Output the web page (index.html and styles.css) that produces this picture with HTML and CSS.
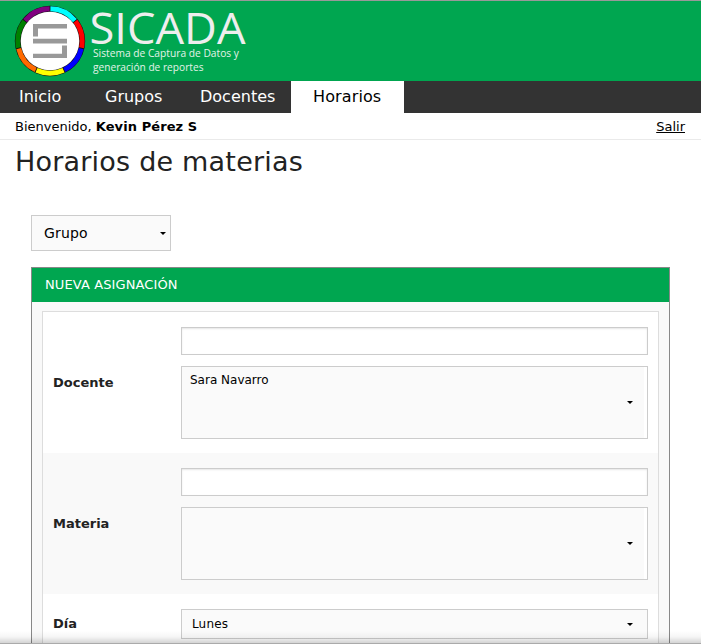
FILE: index.html
```html
<!DOCTYPE html>
<html lang="es">
<head>
<meta charset="utf-8">
<title>SICADA - Horarios</title>
<link rel="stylesheet" href="styles.css">
</head>
<body>
<header class="banner">
  <svg class="logo" width="260" height="80" viewBox="0 1 260 80" role="img" aria-label="SICADA">
    <circle cx="50" cy="41" r="35.2" fill="#111"/>
    <g fill="none" stroke-width="4.9" transform="rotate(-90 50 41)">
      <circle class="seg cyan" cx="50" cy="41" r="32.2" pathLength="70"/>
      <circle class="seg red" cx="50" cy="41" r="32.2" pathLength="70"/>
      <circle class="seg blue" cx="50" cy="41" r="32.2" pathLength="70"/>
      <circle class="seg yellow" cx="50" cy="41" r="32.2" pathLength="70"/>
      <circle class="seg orange" cx="50" cy="41" r="32.2" pathLength="70"/>
      <circle class="seg green" cx="50" cy="41" r="32.2" pathLength="70"/>
      <circle class="seg purple" cx="50" cy="41" r="32.2" pathLength="70"/>
    </g>
    <circle cx="50" cy="41" r="29.3" fill="#fff"/>
    <path fill="#999" d="M33 24h34v4.500H38v8h-5zM33 38.800h34v4.700H33zM62 45.500h5V58H33v-4.300h29z"/>
    <text class="brand" x="89.500" y="44.300" textLength="156" lengthAdjust="spacingAndGlyphs">SICADA</text>
    <text class="tagline" x="93" y="57.300" textLength="146" lengthAdjust="spacingAndGlyphs">Sistema de Captura de Datos y</text>
    <text class="tagline" x="93" y="70.500" textLength="110.500" lengthAdjust="spacingAndGlyphs">generación de reportes</text>
  </svg>
</header>
<nav class="nav">
  <a class="tab inicio">Inicio</a>
  <a class="tab grupos">Grupos</a>
  <a class="tab docentes">Docentes</a>
  <a class="tab active">Horarios</a>
</nav>
<div class="session">
  <span>Bienvenido, <b>Kevin Pérez S</b></span>
  <a class="logout">Salir</a>
</div>
<h1>Horarios de materias</h1>
<main>
  <div class="select group"><span>Grupo</span><i class="arrow"></i></div>
  <section class="panel">
    <h2>NUEVA ASIGNACIÓN</h2>
    <div class="form">
      <div class="row">
        <label>Docente</label>
        <div class="controls">
          <input type="text" class="filter">
          <div class="list"><span>Sara Navarro</span><i class="arrow"></i></div>
        </div>
      </div>
      <div class="row alt">
        <label>Materia</label>
        <div class="controls">
          <input type="text" class="filter">
          <div class="list"><span></span><i class="arrow"></i></div>
        </div>
      </div>
      <div class="row last">
        <label>Día</label>
        <div class="controls">
          <div class="select day"><span>Lunes</span><i class="arrow"></i></div>
        </div>
      </div>
    </div>
  </section>
</main>
<div class="edge"></div>
</body>
</html>
```

FILE: styles.css
```css
* { box-sizing: border-box; }
body {
  margin: 0;
  background: #fff;
  color: #000;
  font: 13px/16px "DejaVu Sans", sans-serif;
}
.banner {
  height: 81px;
  border-top: 1px solid #999;
  background: #00a650;
}
.logo { display: block; }
.seg { stroke-dasharray: 9.700 60.300; }
.cyan { stroke: #0ff; stroke-dashoffset: -0.150; }
.red { stroke: #f00; stroke-dashoffset: -10.150; }
.blue { stroke: #00f; stroke-dashoffset: -20.150; }
.yellow { stroke: #ff0; stroke-dashoffset: -30.150; }
.orange { stroke: #ff6a00; stroke-dashoffset: -40.150; }
.green { stroke: #008000; stroke-dashoffset: -50.150; }
.purple { stroke: #800080; stroke-dashoffset: -60.150; }
.brand { font: 400 44px "Open Sans", sans-serif; fill: #eee; }
.tagline { font: 400 10px "Open Sans", sans-serif; fill: #e4f3e9; }
.nav {
  display: flex;
  height: 32px;
  background: #333;
  color: #fff;
  font-size: 16px;
  line-height: 31px;
}
.tab { padding-left: 19px; }
.inicio { width: 86px; }
.grupos { width: 95px; }
.docentes { width: 110px; }
.active {
  width: 113px;
  padding-left: 22px;
  background: #fff;
  color: #000;
  letter-spacing: .12px;
}
.session {
  display: flex;
  justify-content: space-between;
  height: 27px;
  padding: 6px 16px 0 15px;
  border-bottom: 1px solid #eaeaea;
}
.session b { letter-spacing: .08px; }
.logout { text-decoration: underline; }
h1 {
  margin: 4px 0 0 15px;
  color: #222;
  font-size: 27px;
  font-weight: 400;
  line-height: 36px;
  letter-spacing: .21px;
}
main { padding: 35px 31px 0; }
.select {
  display: flex;
  align-items: center;
  justify-content: space-between;
  border: 1px solid #ccc;
  background: #fafafa;
}
.arrow {
  border: 3px solid transparent;
  border-top-color: #000;
  border-bottom: 0;
}
.group {
  width: 140px;
  height: 36px;
  padding: 0 4px 0 12px;
  font-size: 14px;
  letter-spacing: .15px;
}
.panel {
  height: 377px;
  margin-top: 16px;
  border: 1px solid #888;
  border-bottom: 0;
  background: #f9f9f9;
}
h2 {
  height: 34px;
  margin: 0;
  padding-left: 13px;
  background: #00a650;
  color: #fff;
  font-size: 13px;
  font-weight: 400;
  line-height: 34px;
  letter-spacing: .11px;
}
.form {
  margin: 9px 10px 0;
  border: 1px solid #ddd;
  border-bottom: 0;
  background: #fff;
}
.row {
  display: flex;
  align-items: center;
  padding: 15px 10px 14px;
}
.alt { background: #f9f9f9; }
.last { padding-bottom: 5px; }
.row label {
  width: 128px;
  color: #222;
  font-weight: 700;
}
.controls { flex: 1; }
.filter {
  display: block;
  width: 100%;
  height: 28px;
  margin-bottom: 11px;
  border: 1px solid #ccc;
  box-shadow: inset 0 1px 2px rgba(0, 0, 0, .1);
}
.list {
  display: flex;
  align-items: center;
  justify-content: space-between;
  height: 73px;
  padding: 0 14px 0 8px;
  border: 1px solid #ccc;
  background: linear-gradient(to left, #fff 3px, #fafafa 3px);
  font-size: 12px;
}
.list span {
  align-self: flex-start;
  padding-top: 5px;
}
.day {
  height: 30px;
  padding: 0 14px 0 10px;
  font-size: 12px;
  letter-spacing: .15px;
}
.edge {
  position: absolute;
  bottom: 0;
  left: 0;
  width: 100%;
  height: 13px;
  border-bottom: 1px solid #aaa;
  background: linear-gradient(transparent, rgba(0, 0, 0, .04) 50%, rgba(0, 0, 0, .17));
}
```
